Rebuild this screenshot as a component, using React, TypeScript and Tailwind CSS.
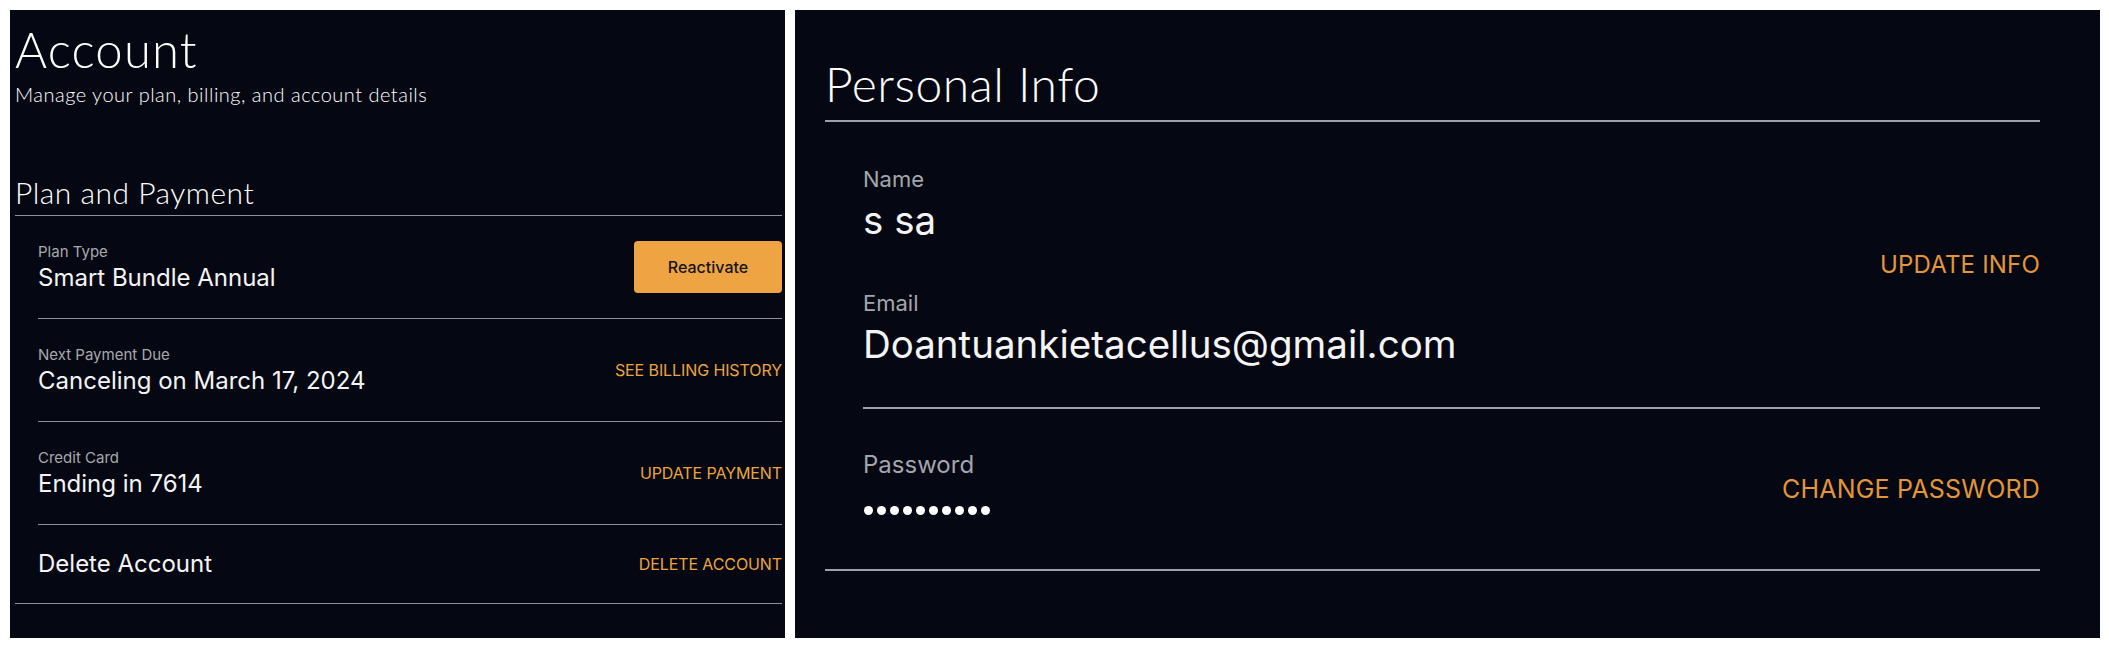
import React from "react";

const leftRows = [
  { label: "Plan Type", value: "Smart Bundle Annual", action: "button" as const, text: "Reactivate" },
  { label: "Next Payment Due", value: "Canceling on March 17, 2024", action: "link" as const, text: "SEE BILLING HISTORY" },
  { label: "Credit Card", value: "Ending in 7614", action: "link" as const, text: "UPDATE PAYMENT" },
];

export default function App() {
  return (
    <div className="flex gap-[10px] bg-white pt-[10px] pl-[10px] pr-[9px] pb-[11px] w-[2109px] h-[649px] font-['Inter',sans-serif]">
      {/* Left panel */}
      <div className="w-[775px] h-[628px] shrink-0 bg-[#050812] pl-[5px] pr-[3px] pt-[15px]">
        <h1 className="font-['Lato',sans-serif] font-light text-[49px] leading-[48px] tracking-[1.2px] text-white">Account</h1>
        <p className="mt-[7px] font-['Lato',sans-serif] font-light text-[20px] leading-[28px] tracking-[0.5px] text-white">
          Manage your plan, billing, and account details
        </p>
        <h2 className="mt-[66px] pb-[5px] border-b border-[#8e9199] font-['Lato',sans-serif] font-light text-[30px] leading-[36px] tracking-[0.5px] text-white">
          Plan and Payment
        </h2>
        <div className="pl-[23px] border-b border-[#8e9199]">
          {leftRows.map((r) => (
            <div key={r.label} className="flex items-center justify-between border-b border-[#8e9199]">
              <div className="flex flex-col pt-[26px] pb-[24px]">
                <span className="text-[15px] leading-[20px] text-[#a7a9ad]">{r.label}</span>
                <span className="text-[24px] leading-[32px] text-[#f4f4f5]">{r.value}</span>
              </div>
              {r.action === "button" ? (
                <button className="w-[148px] h-[52px] rounded-[4px] bg-[#efa443] text-[16px] font-medium text-[#15161a]">
                  {r.text}
                </button>
              ) : (
                <span className="text-[16px] leading-[20px] tracking-[-0.1px] text-[#eba43f]">{r.text}</span>
              )}
            </div>
          ))}
          <div className="flex items-center justify-between">
            <span className="py-[23px] text-[24px] leading-[32px] text-[#f4f4f5]">Delete Account</span>
            <span className="text-[16px] leading-[20px] tracking-[-0.1px] text-[#eba43f]">DELETE ACCOUNT</span>
          </div>
        </div>
      </div>

      {/* Right panel */}
      <div className="w-[1305px] h-[628px] shrink-0 bg-[#050812] pl-[30px] pr-[60px]">
        <h2 className="pt-[50px] pb-[12px] border-b-2 border-[#9ea1a8] font-['Lato',sans-serif] font-light text-[48px] leading-[48px] tracking-[0.5px] text-white">
          Personal Info
        </h2>
        <div className="pl-[38px] border-b-2 border-[#9ea1a8]">
          <div className="flex items-center justify-between border-b-2 border-[#9ea1a8]">
            <div className="flex flex-col pt-[43px] pb-[39px]">
              <span className="text-[22px] leading-[28px] text-[#a3a6ab]">Name</span>
              <span className="mt-[3px] text-[38.5px] leading-[48px] text-[#f4f4f5]">s sa</span>
              <span className="mt-[45px] text-[22px] leading-[28px] text-[#a3a6ab]">Email</span>
              <span className="mt-[3px] text-[38.5px] leading-[48px] text-[#f4f4f5]">Doantuankietacellus@gmail.com</span>
            </div>
            <span className="text-[24px] leading-[28px] tracking-[0.2px] text-[#e3953a]">UPDATE INFO</span>
          </div>
          <div className="flex items-center justify-between">
            <div className="flex flex-col pt-[42px] pb-[54px]">
              <span className="text-[24px] leading-[28px] text-[#a3a6ab]">Password</span>
              <div className="mt-[27px] flex gap-[4px] pl-[1px]">
                {Array.from({ length: 10 }).map((_, i) => (
                  <span key={i} className="w-[9px] h-[9px] rounded-full bg-white" />
                ))}
              </div>
            </div>
            <span className="text-[25px] leading-[28px] tracking-[0.2px] text-[#e3953a]">CHANGE PASSWORD</span>
          </div>
        </div>
      </div>
    </div>
  );
}
